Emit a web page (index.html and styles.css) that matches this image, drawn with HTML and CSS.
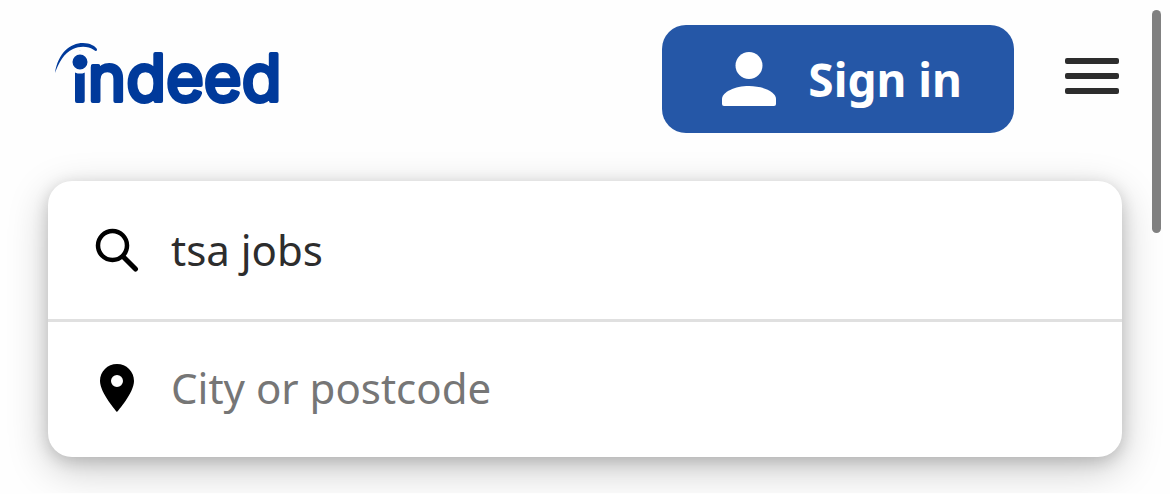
FILE: index.html
```
<!DOCTYPE html>
<html lang="en">
<head>
  <meta charset="UTF-8" />
  <meta name="viewport" content="width=device-width, initial-scale=1.0" />
  <title>Job search | Indeed</title>
  <link rel="stylesheet" href="styles.css">
</head>
<body>
  <header class="topbar">
    <a class="logo" href="#" aria-label="Indeed home">
      <svg width="252" height="82" viewBox="48 38 252 82">
        <text class="wordmark" x="72" y="101">indeed</text>
        <circle class="logo-dot" cx="80" cy="62" r="9.5" />
        <path class="logo-arc" d="M55 73C58 53 70 43 83 43C90 43 95 46 97 49C97 51 96 52 94 50C88 46 80 46 73 49C64 53 59 62 55 73Z" />
      </svg>
    </a>
    <button class="signin" type="button">
      <svg width="54" height="54" viewBox="0 0 54 54" aria-hidden="true">
        <circle cx="27" cy="13.5" r="13.5" />
        <path d="M0 52V47C0 40 13 34 27 34C41 34 54 40 54 47V52Q54 54 52 54H2Q0 54 0 52Z" />
      </svg>
      Sign in
    </button>
    <button class="menu" type="button" aria-label="Menu">
      <span class="bar"></span>
      <span class="bar"></span>
      <span class="bar"></span>
    </button>
  </header>

  <main>
    <form class="search">
      <div class="field">
        <label for="what" aria-label="What">
          <svg width="48" height="48" viewBox="0 0 48 48" fill="none" stroke="#000" aria-hidden="true">
            <circle cx="19.500" cy="19.500" r="14.500" stroke-width="4.500" />
            <path d="M30 30.500L42.500 43" stroke-width="5" stroke-linecap="round" />
          </svg>
        </label>
        <input id="what" type="text" value="tsa jobs">
      </div>
      <div class="field">
        <label for="where" aria-label="Where">
          <svg width="48" height="48" viewBox="0 0 48 48" aria-hidden="true">
            <path fill-rule="evenodd" d="M24 0C14.5 0 7 7.500 7 17C7 29 24 48 24 48C24 48 41 29 41 17C41 7.500 33.500 0 24 0ZM24 11A6 6 0 1 1 24 23A6 6 0 1 1 24 11Z" />
          </svg>
        </label>
        <input id="where" type="text" placeholder="City or postcode">
      </div>
    </form>
  </main>

  <div class="scroll-thumb"></div>
</body>
</html>
```
FILE: styles.css
```
:root {
  --brand: #003a9b;
  --button: #2557a7;
  --text: #2d2d2d;
  --hint: #767676;
  --line: #e0e0e0;
}
* { box-sizing:border-box; margin:0; padding:0; }
html { overflow:hidden; }
body {
  font-family:'Noto Sans', sans-serif;
  background:#fefefe;
  color:var(--text);
  padding:25px 48px 36px;
}
button { border:none; background:none; font:inherit; cursor:pointer; }
svg { display:block; flex:none; }

.topbar { display:flex; align-items:center; gap:48px; margin-bottom:48px; }
.logo { margin-right:auto; }
.wordmark {
  font-family:Inter, sans-serif;
  font-size:65px;
  font-weight:400;
  fill:var(--brand);
  stroke:var(--brand);
  stroke-width:4;
  stroke-linejoin:round;
}
.logo-dot { fill:var(--brand); stroke:#fefefe; stroke-width:4; }
.logo-arc { fill:var(--brand); }
.signin {
  display:flex;
  align-items:center;
  gap:32px;
  height:108px;
  padding:0 52px 0 60px;
  border-radius:24px;
  background:var(--button);
  color:#fff;
  font-size:46px;
  font-weight:700;
}
.signin svg { fill:#fff; }
.menu { display:flex; flex-direction:column; gap:9px; width:60px; padding:0 3px 6px; }
.bar { height:6px; border-radius:2px; background:var(--text); }

.search {
  border-radius:24px;
  background:#fff;
  box-shadow:0 12px 40px rgba(0,0,0,0.22), 0 4px 16px rgba(0,0,0,0.16);
}
.field { display:flex; align-items:center; gap:30px; height:135px; padding:0 45px 3px; }
.field:first-child { height:141px; padding-bottom:0; border-bottom:3px solid var(--line); }
.field input {
  flex:1;
  min-width:0;
  padding-bottom:2px;
  border:none;
  outline:none;
  background:none;
  color:var(--text);
  font-family:inherit;
  font-size:42px;
}
.field input::placeholder { color:var(--hint); opacity:1; }

.scroll-thumb {
  position:fixed;
  top:10px;
  right:9px;
  width:9px;
  height:223px;
  border-radius:5px;
  background:#808080;
}
```
